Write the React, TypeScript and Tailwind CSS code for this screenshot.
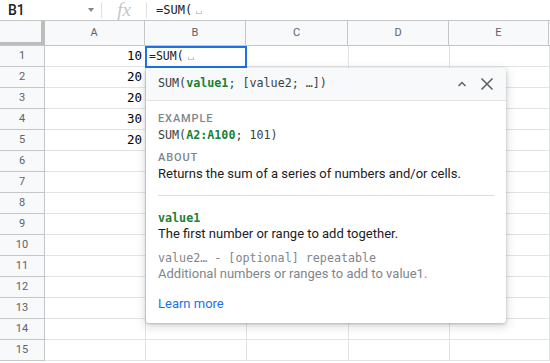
const cols = ['A', 'B', 'C', 'D', 'E'];
const colWidths = ['w-[101px]', 'w-[101px]', 'w-[102px]', 'w-[101px]', 'w-[100px]'];
const values: Record<number, string> = { 1: '10', 2: '20', 3: '20', 4: '30', 5: '20' };
const rows = Array.from({ length: 15 }, (_, i) => i + 1);

const mono = "font-['DejaVu_Sans_Mono',monospace]";
const sans = "font-['Roboto','Liberation_Sans',sans-serif]";

const SpaceMark = () => (
  <span className="inline-block w-[6px] h-[3px] ml-[4px] border border-t-0 border-[#c4c7c5] align-baseline" />
);

const FormulaHelp = () => (
  <div
    className={`absolute left-[146px] top-[68px] w-[360px] h-[255px] bg-white rounded-[3px] shadow-[0_1px_3px_rgba(60,64,67,0.3),0_3px_8px_2px_rgba(60,64,67,0.15)] ${sans}`}
  >
    {/* Header */}
    <div className="h-[33px] flex items-center justify-between pl-[12px] pr-[12px] bg-[#f8f9fa] border-b border-[#e3e3e3] rounded-t-[3px]">
      <div className={`${mono} text-[11.7px] text-[#3c4043]`}>
        SUM(<span className="text-[#188038] font-bold">value1</span>; [value2; …])
      </div>
      <div className="flex items-center gap-[12px] text-[#5f6368]">
        <svg width="12" height="12" viewBox="0 0 12 12" fill="none" stroke="currentColor" strokeWidth="1.5">
          <path d="M2.5 8 L6 4.5 L9.5 8" />
        </svg>
        <svg width="14" height="14" viewBox="0 0 14 14" fill="none" stroke="currentColor" strokeWidth="1.6">
          <path d="M1.5 1.5 L12.5 12.5 M12.5 1.5 L1.5 12.5" />
        </svg>
      </div>
    </div>

    {/* Body */}
    <div className="px-[12px] pt-[10px] pb-[12px]">
      <div className="text-[11px] leading-[16px] font-medium tracking-[0.08em] text-[#80868b]">EXAMPLE</div>
      <div className={`${mono} text-[11.7px] leading-[16px] text-[#3c4043]`}>
        SUM(<span className="text-[#188038] font-bold">A2:A100</span>; 101)
      </div>
      <div className="mt-[7px] text-[11px] leading-[16px] font-medium tracking-[0.08em] text-[#80868b]">ABOUT</div>
      <div className="text-[13px] leading-[16px] text-[#202124]">Returns the sum of a series of numbers and/or cells.</div>

      <div className="mt-[13px] border-t border-[#dadce0]" />

      <div className={`mt-[14px] ${mono} text-[11.7px] leading-[16px] font-bold text-[#188038]`}>value1</div>
      <div className="text-[13px] leading-[16px] text-[#202124]">The first number or range to add together.</div>
      <div className={`mt-[8px] ${mono} text-[11.7px] leading-[16px] text-[#80868b]`}>value2… - [optional] repeatable</div>
      <div className="text-[13px] leading-[16px] text-[#80868b]">Additional numbers or ranges to add to value1.</div>

      <div className="mt-[14px] text-[13px] leading-[16px] text-[#1a73e8]">Learn more</div>
    </div>
  </div>
);

export default function App() {
  return (
    <div className={`relative w-[550px] h-[363px] overflow-hidden bg-white ${sans}`}>
      {/* Formula bar */}
      <div className="h-[21px] flex items-center border-b border-[#c4c7c5]">
        <div className="w-[101px] flex items-center justify-between pl-[8px] pr-[7px]">
          <span className="text-[14px] font-medium text-[#202124]">B1</span>
          <span className="w-0 h-0 border-l-[3px] border-r-[3px] border-t-[4px] border-l-transparent border-r-transparent border-t-[#80868b]" />
        </div>
        <div className="w-px h-[15px] bg-[#e0e0e0]" />
        <div className="w-[44px] flex justify-center">
          <span className="font-['Liberation_Serif',serif] italic text-[19px] leading-[18px] text-[#c4c7c5]">fx</span>
        </div>
        <div className="w-px h-[15px] bg-[#e0e0e0]" />
        <div className={`pl-[9px] ${mono} text-[12px] text-[#202124] flex items-baseline`}>
          =SUM(<SpaceMark />
        </div>
      </div>

      {/* Column header */}
      <div className="flex h-[25px] bg-[#f8f9fa] border-b border-[#c4c7c5]">
        <div className="w-[45px] h-full border-r-[4px] border-b-[3px] border-[#bdbdbd] -mr-px" />
        {cols.map((c, i) => (
          <div
            key={c}
            className={`${colWidths[i]} h-full flex items-center justify-center border-r border-[#c4c7c5] text-[11px] text-[#5f6368]`}
          >
            {c}
          </div>
        ))}
      </div>

      {/* Rows */}
      {rows.map((r) => (
        <div key={r} className="flex h-[21px]">
          <div className="w-[45px] h-full flex items-center justify-center bg-[#f8f9fa] border-r border-b border-[#c4c7c5] text-[11px] text-[#5f6368]">
            {r}
          </div>
          {cols.map((c, i) => (
            <div
              key={c}
              className={`${colWidths[i]} h-full border-r border-b border-[#e2e3e3] flex items-center ${
                i === 0 ? 'justify-end pr-[3px]' : 'pl-[3px]'
              } ${mono} text-[12.5px] text-[#000000]`}
            >
              {i === 0 ? values[r] ?? '' : ''}
            </div>
          ))}
        </div>
      ))}

      {/* Active cell B1 */}
      <div className={`absolute left-[145px] top-[46px] w-[102px] h-[22px] border-2 border-[#1a73e8] bg-white flex items-center pl-[2px] ${mono} text-[11.5px] text-[#202124]`}>
        <span className="flex items-baseline">
          =SUM(<SpaceMark />
        </span>
      </div>

      <FormulaHelp />
    </div>
  );
}
